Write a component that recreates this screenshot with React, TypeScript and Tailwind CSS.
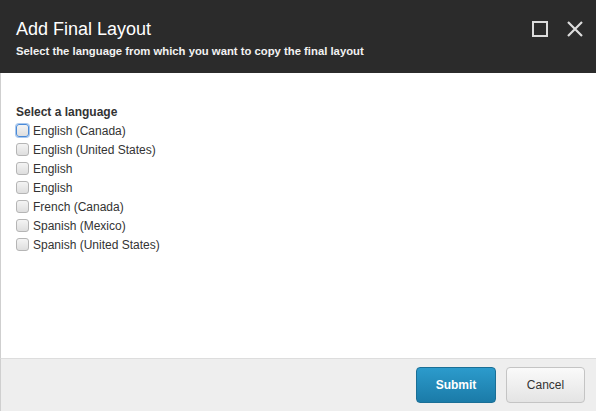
import React from "react";

const langs = [
  "English (Canada)",
  "English (United States)",
  "English",
  "English",
  "French (Canada)",
  "Spanish (Mexico)",
  "Spanish (United States)",
];

export default function App() {
  return (
    <div
      className="w-[596px] h-[411px] flex flex-col bg-white overflow-hidden"
      style={{ fontFamily: '"Liberation Sans", Arial, sans-serif' }}
    >
      <div className="h-[73px] shrink-0 bg-[#2b2b2b] flex justify-between pl-[16px] pr-[13px]">
        <div className="pt-[18px]">
          <div className="text-[18px] leading-[22px] text-white">Add Final Layout</div>
          <div className="text-[11.3px] leading-[16px] font-bold text-[#f2f2f2] mt-[3px]">
            Select the language from which you want to copy the final layout
          </div>
        </div>
        <div className="flex items-start gap-[19px] pt-[21px]">
          <svg width="16" height="16" viewBox="0 0 16 16">
            <rect x="1" y="1" width="14" height="14" fill="none" stroke="#dcdcdc" strokeWidth="2" />
          </svg>
          <svg width="16" height="16" viewBox="0 0 16 16">
            <path d="M1 1 L15 15 M15 1 L1 15" stroke="#dcdcdc" strokeWidth="2.2" />
          </svg>
        </div>
      </div>
      <div className="flex-1 border-l border-[#cfcfcf] pl-[15px] pt-[31px]">
        <div className="text-[12px] leading-[16px] font-bold text-[#333]">Select a language</div>
        <div className="flex flex-col mt-[1px]">
          {langs.map((l, i) => (
            <label key={i} className="h-[19px] flex items-center gap-[4px] text-[12px] text-[#333]">
              <span
                className={
                  "w-[13px] h-[13px] rounded-[3px] border bg-gradient-to-b from-[#f4f4f4] to-[#dedede] " +
                  (i === 0 ? "border-[#4a8ad8] shadow-[0_0_0_1px_#a9c8ee]" : "border-[#b5b5b5]")
                }
              />
              <span>{l}</span>
            </label>
          ))}
        </div>
      </div>
      <div className="h-[53px] shrink-0 bg-[#eeeeee] border-t border-[#dddddd] border-l border-l-[#cfcfcf] flex items-center justify-end gap-[10px] pr-[11px]">
        <button className="w-[80px] h-[36px] rounded-[4px] border border-[#1a6f96] bg-gradient-to-b from-[#2c9bcc] to-[#1b7ba8] text-white text-[12px] font-bold">
          Submit
        </button>
        <button className="w-[79px] h-[36px] rounded-[4px] border border-[#c4c4c4] bg-gradient-to-b from-[#fafafa] to-[#e4e4e4] text-[#333] text-[12px]">
          Cancel
        </button>
      </div>
    </div>
  );
}
